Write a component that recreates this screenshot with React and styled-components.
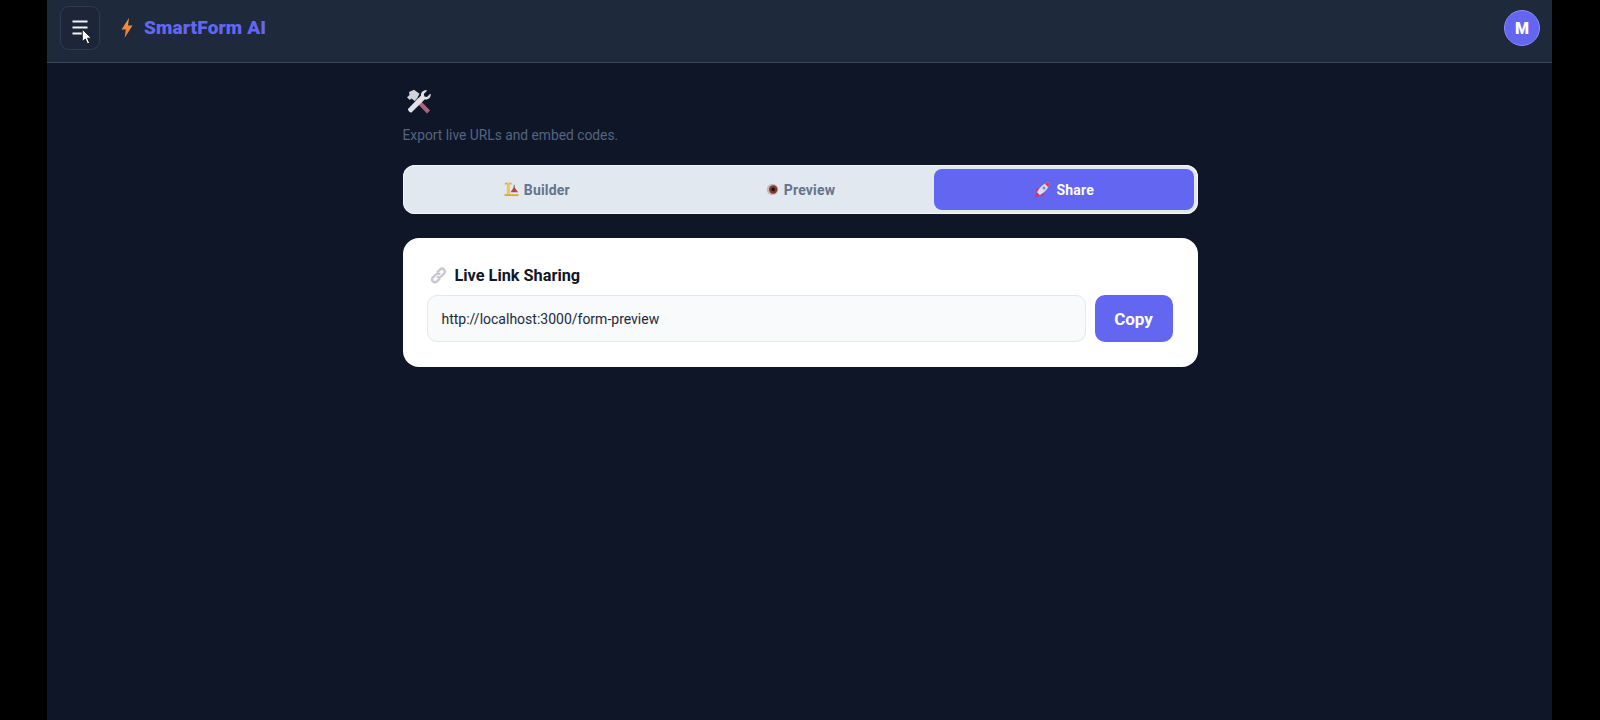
import styled, { createGlobalStyle } from "styled-components";

const GlobalStyle = createGlobalStyle`
  html, body {
    margin: 0;
    padding: 0;
    height: 100%;
    background: #000;
    overflow: hidden;
  }
  #root { height: 100%; }
  * { box-sizing: border-box; }
`;

function MenuIcon() {
  return (
    <svg width="18" height="18" viewBox="0 0 18 18" fill="none" stroke="#f1f5f9" strokeWidth="2">
      <path d="M1.500 2.500h15M1.500 8.500h15M1.500 14.500h10" />
    </svg>
  );
}

function Cursor() {
  return (
    <CursorMark width="12" height="17" viewBox="0 0 11 16">
      <path d="M1 1v12l2.900-2.600 2 4.600 2.100-1-2-4.400h3.700z" fill="#fff" stroke="#111" strokeWidth="0.9" />
    </CursorMark>
  );
}

function Bolt() {
  return (
    <svg width="12" height="20" viewBox="0 0 12 20">
      <defs>
        <linearGradient id="boltFill" x1="0" y1="0" x2="0" y2="1">
          <stop offset="0" stopColor="#f2a03d" />
          <stop offset="1" stopColor="#ee6f3c" />
        </linearGradient>
      </defs>
      <path d="M8 0 .5 11.500h4.300L3.600 20 11.500 7.600H7z" fill="url(#boltFill)" />
    </svg>
  );
}

function Tools() {
  return (
    <svg width="26" height="26" viewBox="0 0 26 26">
      <path d="M9 12 21 24.500l3-3L12 9z" fill="#a8667e" />
      <path d="M3 3 8 .8l5.500 4L11 9.500 8.500 12 5.500 9.500 3.800 11 1 8.300 3.500 6z" fill="#cfd3da" />
      <path d="M24.500 4.500 21 8l-2.600-.6L17.800 5l3.400-3.600C17.800.4 14.600 3 15 6.600L2.200 19.800c-.9 1 .2 1.500.8 2.600 1 1 2 1.600 3 .6L18.600 10.400c3.900.8 6.900-2.400 5.900-5.900z" fill="#dfe2e7" />
    </svg>
  );
}

function Crane() {
  return (
    <svg width="15" height="15" viewBox="0 0 16 16">
      <path d="M1 .8h7v1.900H1z" fill="#d9a83f" />
      <path d="M3 1h3.400v13H3z" fill="#eec565" />
      <path d="M.5 13h15v2H.5z" fill="#d9a83f" />
      <path d="M7 11 10.800 5l4.200 6z" fill="#b8433f" />
      <path d="M10.300 3h1v3h-1z" fill="#7a5a30" />
    </svg>
  );
}

function Eye() {
  return (
    <svg width="13" height="13" viewBox="0 0 13 13">
      <circle cx="6.500" cy="6.500" r="5.700" fill="#c9b7b4" />
      <circle cx="7.200" cy="6.500" r="4.200" fill="#7a3c30" />
      <circle cx="7.200" cy="6.500" r="1.800" fill="#1c0d0b" />
    </svg>
  );
}

function Rocket() {
  return (
    <svg width="17" height="17" viewBox="0 0 17 17">
      <path d="M4.500 6.500 1 8.500l1.500 1.500L5 10z" fill="#d8325f" />
      <path d="M10.500 12.500 8.500 16 7 14.500 7 12z" fill="#d8325f" />
      <path d="M3 11.500C5.500 6 10 2 16 1c-1 6-5 10.500-10.500 13z" fill="#dcdcec" />
      <path d="M16 1c-1.900.3-3.600.9-5.200 1.800l3.400 3.400C15.100 4.600 15.700 2.900 16 1z" fill="#d8325f" />
      <circle cx="10" cy="7" r="1.500" fill="#6f8fd8" />
      <path d="M1 16c0-1.800.6-3.200 2-4.500l2.500 2.500C4.200 15.400 2.800 16 1 16z" fill="#d8325f" />
    </svg>
  );
}

function LinkGlyph() {
  return (
    <svg width="17" height="17" viewBox="0 0 17 17" fill="none" stroke="#c9c7cf" strokeWidth="2.400">
      <path d="M7 5.500 10 2.600c1.100-1.100 2.900-1.100 4 0s1.100 2.900 0 4L11 9.500c-1.100 1.100-2.900 1.100-4 0" />
      <path d="M10 7.500c-1.100-1.100-2.900-1.100-4 0L3 10.400c-1.100 1.100-1.100 2.900 0 4s2.900 1.100 4 0L10 11.500" />
    </svg>
  );
}

export default function App() {
  return (
    <>
      <GlobalStyle />
      <Page>
        <Header>
          <Brand>
            <MenuButton>
              <MenuIcon />
              <Cursor />
            </MenuButton>
            <Logo>
              <Bolt />
              <LogoText>SmartForm AI</LogoText>
            </Logo>
          </Brand>
          <Avatar>M</Avatar>
        </Header>
        <Content>
          <Column>
            <PageIcon>
              <Tools />
            </PageIcon>
            <Subtitle>Export live URLs and embed codes.</Subtitle>
            <Tabs>
              <Tab>
                <Crane />
                Builder
              </Tab>
              <Tab>
                <Eye />
                Preview
              </Tab>
              <Tab $active>
                <Rocket />
                Share
              </Tab>
            </Tabs>
            <Card>
              <CardTitle>
                <LinkGlyph />
                Live Link Sharing
              </CardTitle>
              <ShareRow>
                <UrlInput readOnly value="http://localhost:3000/form-preview" />
                <CopyButton>Copy</CopyButton>
              </ShareRow>
            </Card>
          </Column>
        </Content>
      </Page>
    </>
  );
}

const Page = styled.div`
  width: 1505px;
  height: 720px;
  margin-left: 47px;
  background: #0f1628;
  font-family: Roboto, "Noto Sans", sans-serif;
  display: flex;
  flex-direction: column;
`;

const Header = styled.header`
  height: 63px;
  flex-shrink: 0;
  padding: 6px 12px 0 13px;
  display: flex;
  align-items: flex-start;
  justify-content: space-between;
  background: #1e293b;
  border-bottom: 1px solid #3a4557;
`;

const Brand = styled.div`
  display: flex;
  align-items: flex-start;
  gap: 21px;
`;

const MenuButton = styled.button`
  position: relative;
  width: 40px;
  height: 44px;
  padding: 0;
  display: flex;
  align-items: center;
  justify-content: center;
  background: #1c2638;
  border: 1px solid #303b4d;
  border-radius: 9px;
`;

const CursorMark = styled.svg`
  position: absolute;
  left: 20px;
  top: 21px;
`;

const Logo = styled.div`
  display: flex;
  align-items: center;
  gap: 11px;
  height: 43px;
`;

const LogoText = styled.span`
  font-size: 19px;
  letter-spacing: 0.15px;
  font-weight: 900;
  color: #6366f1;
`;

const Avatar = styled.div`
  width: 36px;
  height: 36px;
  margin-top: 4px;
  border-radius: 50%;
  display: flex;
  align-items: center;
  justify-content: center;
  background: #6366f1;
  border: 1px solid #8a8cf5;
  color: #fff;
  font-size: 16px;
  font-weight: 900;
`;

const Content = styled.main`
  flex: 1;
  display: flex;
  justify-content: center;
  padding: 25px 0 0 1px;
`;

const Column = styled.div`
  width: 795px;
`;

const PageIcon = styled.div`
  height: 28px;
  padding-left: 3px;
  display: flex;
  align-items: center;
`;

const Subtitle = styled.p`
  margin: 9px 0 0;
  font-size: 13.800px;
  line-height: 20px;
  color: #55647f;
`;

const Tabs = styled.div`
  margin-top: 20px;
  height: 49px;
  padding: 4px 3px 4px 4px;
  display: grid;
  grid-template-columns: repeat(3, 1fr);
  gap: 3px;
  background: #e2e8f0;
  border-radius: 12px;
  box-shadow: inset 0 0 0 1px #f4f6fa;
`;

const Tab = styled.div`
  display: flex;
  align-items: center;
  justify-content: center;
  gap: 5px;
  font-size: 14px;
  letter-spacing: 0.2px;
  font-weight: 700;
  border-radius: 8px;
  color: ${(p) => (p.$active ? "#fff" : "#64748b")};
  background: ${(p) => (p.$active ? "#6366f1" : "transparent")};
`;

const Card = styled.section`
  margin-top: 24px;
  height: 129px;
  padding: 25px 25px 0 24px;
  background: #fff;
  border-radius: 16px;
`;

const CardTitle = styled.h3`
  margin: 0;
  height: 24px;
  padding-left: 3px;
  display: flex;
  align-items: center;
  gap: 8px;
  font-size: 16.300px;
  font-weight: 700;
  color: #0f172a;
`;

const ShareRow = styled.div`
  margin-top: 8px;
  display: flex;
  gap: 9px;
`;

const UrlInput = styled.input`
  flex: 1;
  height: 47px;
  padding: 0 14px;
  background: #f8fafc;
  border: 1px solid #e2e8f0;
  border-radius: 10px;
  font-family: inherit;
  font-size: 14px;
  color: #1e293b;
  outline: none;
`;

const CopyButton = styled.button`
  width: 78px;
  height: 47px;
  background: #6366f1;
  border: 0;
  border-radius: 10px;
  font-family: inherit;
  font-size: 17px;
  font-weight: 700;
  color: #fff;
`;
